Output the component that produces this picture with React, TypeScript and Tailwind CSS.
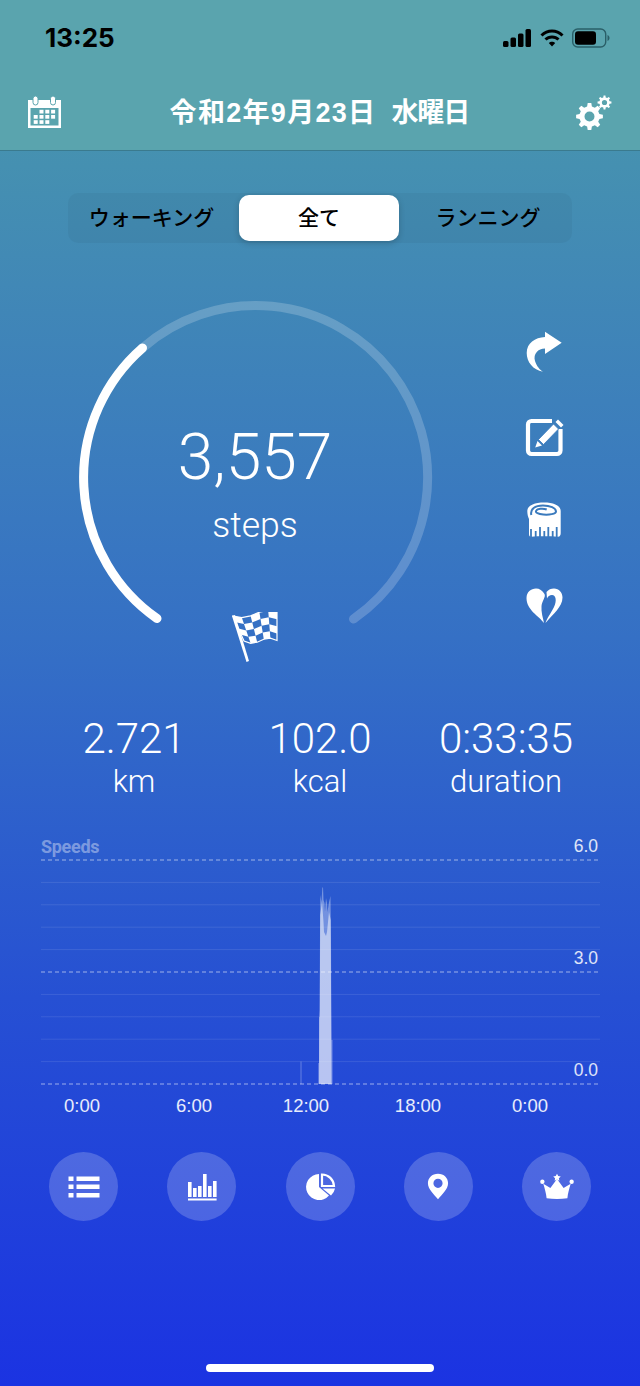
import React from 'react';

const toolBg = '#3a7abd';

function gearPath(cx: number, cy: number, outer: number, inner: number, hole: number, teeth: number) {
  const step = (Math.PI * 2) / teeth;
  let d = '';
  for (let i = 0; i < teeth; i++) {
    const a = i * step;
    const pts: [number, number][] = [
      [inner, a - step * 0.3],
      [outer, a - step * 0.17],
      [outer, a + step * 0.17],
      [inner, a + step * 0.3],
    ];
    pts.forEach(([r, t], j) => {
      d += `${i === 0 && j === 0 ? 'M' : 'L'}${(cx + r * Math.cos(t)).toFixed(2)} ${(cy + r * Math.sin(t)).toFixed(2)} `;
    });
  }
  d += `Z M${cx + hole} ${cy} A${hole} ${hole} 0 1 0 ${cx - hole} ${cy} A${hole} ${hole} 0 1 0 ${cx + hole} ${cy} Z`;
  return d;
}

const CalendarIcon = () => (
  <svg width="36" height="36" viewBox="0 0 36 36" fill="white">
    <path fillRule="evenodd" d="M1 5H34V33H1ZM3.500 13V30.500H31.500V13Z" />
    <rect x="6" y="1" width="5" height="9" rx="2.500" stroke="#5aa4ae" strokeWidth="1" />
    <rect x="23.500" y="1" width="5" height="9" rx="2.500" stroke="#5aa4ae" strokeWidth="1" />
    {[
      [12.500, 14.800],
      [18.300, 14.800],
      [24.100, 14.800],
      [6.700, 20],
      [12.500, 20],
      [18.300, 20],
      [24.100, 20],
      [6.700, 25.200],
      [12.500, 25.200],
      [18.300, 25.200],
    ].map(([x, y]) => (
      <rect key={`${x}-${y}`} x={x} y={y} width="4" height="3.700" />
    ))}
  </svg>
);

const GearsIcon = () => (
  <svg width="36" height="36" viewBox="0 0 36 36" fill="white">
    <path fillRule="evenodd" d={gearPath(13.5, 21.5, 13.5, 10.2, 5, 8)} />
    <path fillRule="evenodd" d={gearPath(28.5, 7.5, 7, 5.2, 2.6, 8)} />
  </svg>
);

const ShareIcon = () => (
  <svg width="40" height="44" viewBox="0 0 40 44" fill="white">
    <path d="M20 1.700L36.700 12.700L20 24V18.500C13 18.500 8 24 10 31C11.500 36 15 40 18 41.700C8 40 1.700 32 1.700 23C1.700 13 10 7.500 20 7Z" />
  </svg>
);

const EditIcon = () => (
  <svg className="overflow-visible" width="40" height="40" viewBox="0 0 40 40" fill="none">
    <path d="M27 3H6.500A3.500 3.500 0 0 0 3 6.500V32.500A3.500 3.500 0 0 0 6.500 36H32A3.500 3.500 0 0 0 35.500 32.500V11" stroke="white" strokeWidth="4.200" />
    <path d="M12.500 23L17 27.500L10.200 29.500Z" fill="white" />
    <path d="M13.500 21.500L28.500 6L33.500 11L18.500 26.500Z" fill="white" stroke={toolBg} strokeWidth="0.800" />
    <path d="M30.500 4L33 1.500L38.500 7L36 9.500Z" fill="white" />
  </svg>
);

const TapeIcon = () => (
  <svg width="40" height="40" viewBox="0 0 40 40" fill="white">
    <path d="M2.300 11C2.300 5.500 9.500 2.500 19 2.500C28.500 2.500 35.700 5.500 35.700 11V33C35.700 35 35 36.700 33 36.700C24 36.200 14 36.200 6 36.700C4.500 36.700 4 35.500 4 34V19C3 17 2.300 14 2.300 11Z" />
    <path
      d="M6.300 15C5 9 10 5.500 18 5.500C25 5.500 31 8 31 11.500C31 14 24 15 18.300 14.500C13 14 10.500 12.500 11 11C12 8.500 18 8 21.700 9.500"
      fill="none"
      stroke={toolBg}
      strokeWidth="2"
    />
    <path d="M6 37V29M10.700 37V31M15 37V27M19.300 37V31M23.300 37V27M27.700 37V31M31.700 37V27" stroke={toolBg} strokeWidth="1.800" />
  </svg>
);

const HeartIcon = () => (
  <svg width="40" height="40" viewBox="0 0 40 40" fill="white">
    <path d="M19 37C14 30 1.500 24 1.500 12C1.500 6 6 2.500 11 2.500C14.500 2.500 17.500 4.500 19.500 8C21 11 17 15 16.500 20C16 26 18 32 19 37Z" />
    <path d="M21.500 6C23.500 3.500 26 2.500 29 2.500C34 2.500 37.500 6.500 37.500 11.500C37.500 21 28 28 20.500 37C21.500 33 26 27 29 21C32 15 31 9 27 9C24.500 9 23 10.500 22 12.500Z" />
  </svg>
);

// checkered flag, cells follow a waving cloth
const flagPoint = (u: number, v: number): [number, number] => {
  const x = 3 + u * 44 + (1 - u) * v * 11;
  const top = 4 - u * 4 + Math.sin(u * Math.PI * 2) * 2.5;
  const bottom = 29 - u * 0.5 + Math.sin(u * Math.PI * 2) * 2.5;
  return [x, top + (bottom - top) * v];
};

const FlagIcon = () => {
  const cells: React.ReactNode[] = [];
  const cols = 5;
  const rows = 4;
  for (let i = 0; i < cols; i++) {
    for (let j = 0; j < rows; j++) {
      if ((i + j) % 2 !== 0) continue;
      const pts = [
        flagPoint(i / cols, j / rows),
        flagPoint((i + 1) / cols, j / rows),
        flagPoint((i + 1) / cols, (j + 1) / rows),
        flagPoint(i / cols, (j + 1) / rows),
      ];
      cells.push(<polygon key={`${i}-${j}`} points={pts.map((p) => p.join(',')).join(' ')} />);
    }
  }
  return (
    <svg width="50" height="52" viewBox="0 0 50 52" fill="white">
      <path d="M2 4L5 3L19 49L16.500 50Z" />
      {cells}
      <path
        d={`M${[0, 0.2, 0.4, 0.6, 0.8, 1].map((u) => flagPoint(u, 0).join(' ')).join('L')}L${[1, 0.8, 0.6, 0.4, 0.2, 0]
          .map((u) => flagPoint(u, 1).join(' '))
          .join('L')}Z`}
        fill="none"
        stroke="white"
        strokeWidth="1.200"
      />
    </svg>
  );
};

const ListIcon = () => (
  <svg width="32" height="24" viewBox="0 0 32 24" fill="white">
    <rect x="0.500" y="1.500" width="5" height="4.500" />
    <rect x="8.500" y="1.500" width="23" height="4.500" />
    <rect x="0.500" y="9.500" width="5" height="4.500" />
    <rect x="8.500" y="9.500" width="23" height="4.500" />
    <rect x="0.500" y="18" width="5" height="4.500" />
    <rect x="8.500" y="18" width="23" height="4.500" />
  </svg>
);

const BarsIcon = () => (
  <svg width="30" height="28" viewBox="0 0 30 28" fill="white">
    <rect x="1" y="9" width="3.600" height="15" />
    <rect x="6" y="15" width="3.600" height="9" />
    <rect x="11" y="13" width="3.600" height="11" />
    <rect x="16" y="1" width="3.600" height="23" />
    <rect x="21" y="13" width="3.600" height="11" />
    <rect x="26" y="8" width="3.600" height="16" />
    <rect x="1" y="25.500" width="28.600" height="2" />
  </svg>
);

const PieIcon = () => (
  <svg width="36" height="32" viewBox="0 0 36 32" fill="white">
    <path d="M17 3A13 13 0 1 0 27 24.400L17 16Z" />
    <path d="M20 3.500A12 12 0 0 1 32 15H20Z" fill="none" stroke="white" strokeWidth="2.200" />
    <path d="M20.500 17.500H33A13 13 0 0 1 29 24.500Z" />
  </svg>
);

const PinIcon = () => (
  <svg width="22" height="29" viewBox="0 0 24 30" fill="white">
    <path
      fillRule="evenodd"
      d="M12 1C5.500 1 1 5.500 1 11.500C1 18 8 24 12 29C16 24 23 18 23 11.500C23 5.500 18.500 1 12 1ZM12 6.500A5 5 0 1 1 12 16.500A5 5 0 1 1 12 6.500Z"
    />
  </svg>
);

const CrownIcon = () => (
  <svg width="34" height="27" viewBox="0 0 36 28" fill="white">
    <path d="M7 26.500C6.500 21 5 16 3.500 11L11 15.500L18 6L25 15.500L32.500 11C31 16 29.500 21 29 26.500C22 27.500 14 27.500 7 26.500Z" />
    <path d="M18 0.500L19.300 3L22 3.400L20 5.300L20.500 8L18 6.700L15.500 8L16 5.300L14 3.400L16.700 3Z" />
    <circle cx="2.500" cy="9" r="2.300" />
    <circle cx="33.500" cy="9" r="2.300" />
  </svg>
);

const StatusBar = () => (
  <div className="h-[76px] flex items-start justify-between pl-[45px] pr-[30px] pt-[24px]">
    <span className="text-[26px] leading-[28px] font-bold text-black font-['Inter',sans-serif]">13:25</span>
    <div className="flex items-center gap-[8px] pt-[4px]">
      <svg width="29" height="18" viewBox="0 0 29 18" fill="black">
        <rect x="0" y="12" width="5.500" height="6" rx="1.500" />
        <rect x="7.500" y="8.500" width="5.500" height="9.500" rx="1.500" />
        <rect x="15" y="4.500" width="5.500" height="13.500" rx="1.500" />
        <rect x="22.500" y="0" width="5.500" height="18" rx="1.500" />
      </svg>
      <svg width="24" height="18" viewBox="0 0 24 18" fill="none" stroke="black" strokeWidth="3">
        <path d="M1.500 6.500C7.500 0.500 16.500 0.500 22.500 6.500" />
        <path d="M5.500 10.500C9 7 15 7 18.500 10.500" />
        <path d="M12 17.500L8.800 14C10.500 12.300 13.500 12.300 15.200 14Z" fill="black" stroke="none" />
      </svg>
      <svg width="38" height="20" viewBox="0 0 38 20" fill="none">
        <rect x="0.700" y="1" width="33" height="18" rx="5" stroke="#2a5f68" strokeWidth="1.400" />
        <rect x="3" y="3.300" width="21" height="13.400" rx="3" fill="black" />
        <path d="M35.500 7V13C36.800 12.500 37.500 11.300 37.500 10C37.500 8.700 36.800 7.500 35.500 7Z" fill="#2a5f68" />
      </svg>
    </div>
  </div>
);

const ticksLight = [882.4, 904.8, 927.2, 949.6, 994.4, 1016.8, 1039.2, 1061.6];
const ticksDash = [860, 972, 1084];

// speed trace around noon: faint envelope, then the denser body
const traceOuter =
  '318.300,1084 318.300,1063 319,1063 319,1017 319.600,1017 320,930 320.300,895 321.500,902 322.300,888 323,887 323.500,900 324.500,903 325,912 326,898 327,903 327.500,912 329,902 330.500,896 331,940 331.500,1040 332.500,1040 332.500,1084';
const traceInner =
  '319,1084 319.300,1020 319.800,1010 320.200,915 322,902 323.500,922 324,932 326,936 327,932 328,922 329,912 330.700,920 331.500,1084';

const SpeedChart = () => (
  <div className="relative mt-[35px] h-[272px]">
    <svg className="absolute left-0 top-0" width="640" height="272" viewBox="0 836 640 272">
      {ticksLight.map((y) => (
        <line key={y} x1="41" x2="600" y1={y} y2={y} stroke="white" strokeOpacity="0.1" strokeWidth="1" />
      ))}
      <rect x="300.500" y="1061.500" width="1" height="22.500" fill="white" fillOpacity="0.3" />
      <polygon points={traceOuter} fill="white" fillOpacity="0.35" />
      <polygon points={traceInner} fill="white" fillOpacity="0.5" />
      {ticksDash.map((y) => (
        <line
          key={y}
          x1="41"
          x2="598"
          y1={y}
          y2={y}
          stroke="white"
          strokeOpacity="0.55"
          strokeWidth="1"
          strokeDasharray="4 3"
        />
      ))}
    </svg>
    <span className="absolute left-[41px] top-[0px] text-[18px] leading-[21px] font-bold text-white/40 font-['Roboto',sans-serif] tracking-[-0.3px]">
      Speeds
    </span>
    <span className="absolute right-[42px] top-[0px] text-[17.5px] leading-[20px] text-white/85">6.0</span>
    <span className="absolute right-[42px] top-[112px] text-[17.5px] leading-[20px] text-white/85">3.0</span>
    <span className="absolute right-[42px] top-[224px] text-[17.5px] leading-[20px] text-white/85">0.0</span>
    <div className="absolute left-[26px] top-[260px] w-[560px] grid grid-cols-5 text-center text-[18.5px] leading-[20px] text-white/90">
      <span>0:00</span>
      <span>6:00</span>
      <span>12:00</span>
      <span>18:00</span>
      <span>0:00</span>
    </div>
  </div>
);

const NavButton = ({ children }: { children: React.ReactNode }) => (
  <button className="w-[69px] h-[69px] rounded-full bg-white/20 flex items-center justify-center">{children}</button>
);

const Stat = ({ value, label }: { value: string; label: string }) => (
  <div className="flex flex-col items-center text-white font-['Roboto',sans-serif] font-light">
    <span className="text-[42px] leading-[48px]">{value}</span>
    <span className="text-[31px] leading-[38px]">{label}</span>
  </div>
);

export default function App() {
  return (
    <div className="relative w-[640px] h-[1386px] flex flex-col overflow-hidden font-['Liberation_Sans','Noto_Sans_CJK_JP',sans-serif] bg-[linear-gradient(180deg,#4a98ae_0%,#4590b1_12%,#3570c5_46%,#2650d3_72%,#1b33e2_100%)]">
      {/* header */}
      <div className="h-[151px] shrink-0 bg-[#5aa4ae] border-b border-[#3a7a8e]">
        <StatusBar />
        <div className="flex items-center justify-between pl-[27px] pr-[28px] h-[74px]">
          <CalendarIcon />
          <h1 className="flex gap-[15px] text-[27px] leading-[32px] font-bold text-white">
            <span className="tracking-[1.3px]">令和2年9月23日</span>
            <span className="tracking-[-1px]">水曜日</span>
          </h1>
          <GearsIcon />
        </div>
      </div>

      {/* segment */}
      <div className="mt-[42px] ml-[68px] w-[504px] h-[50px] rounded-[10px] bg-black/[0.04] flex items-center text-[21px] font-medium text-black">
        <span className="w-[171px] pr-[4px] text-center">ウォーキング</span>
        <span className="w-[160px] h-[46px] rounded-[10px] bg-white flex items-center justify-center shadow-[0_2px_6px_rgba(0,0,0,0.2)]">
          全て
        </span>
        <span className="flex-1 pl-[5px] text-center">ランニング</span>
      </div>

      {/* gauge and side tools */}
      <div className="mt-[50px] h-[378px] flex">
        <div className="relative w-[525px] h-full">
          <svg className="absolute left-0 top-0" width="525" height="378" viewBox="0 293 525 378" fill="none">
            <path d="M142.500 348A172 172 0 1 1 353.500 619" stroke="white" strokeOpacity="0.2" strokeWidth="9" strokeLinecap="round" />
            <path d="M157 618.500A172 172 0 0 1 142.500 348" stroke="white" strokeWidth="9" strokeLinecap="round" />
          </svg>
          <div className="absolute left-[79px] top-[129px] w-[352px] flex flex-col items-center text-white font-['Roboto',sans-serif] font-light">
            <span className="text-[64px] leading-[72px]">3,557</span>
            <span className="text-[35.5px] leading-[42px] mt-[10px]">steps</span>
          </div>
          <div className="absolute left-[230px] top-[319px]">
            <FlagIcon />
          </div>
        </div>
        <div className="w-[40px] flex flex-col pt-[37px]">
          <ShareIcon />
          <div className="h-[40px] mt-[44px]">
            <EditIcon />
          </div>
          <div className="h-[40px] mt-[42px]">
            <TapeIcon />
          </div>
          <div className="h-[40px] mt-[46px]">
            <HeartIcon />
          </div>
        </div>
      </div>

      {/* totals */}
      <div className="mt-[44px] ml-[41px] w-[558px] grid grid-cols-3">
        <Stat value="2.721" label="km" />
        <Stat value="102.0" label="kcal" />
        <Stat value="0:33:35" label="duration" />
      </div>

      <SpeedChart />

      {/* bottom nav */}
      <div className="mt-[44px] pl-[49px] pr-[49px] flex justify-between">
        <NavButton>
          <ListIcon />
        </NavButton>
        <NavButton>
          <BarsIcon />
        </NavButton>
        <NavButton>
          <PieIcon />
        </NavButton>
        <NavButton>
          <PinIcon />
        </NavButton>
        <NavButton>
          <CrownIcon />
        </NavButton>
      </div>

      <div className="mt-auto mb-[14px] mx-auto w-[228px] h-[8px] rounded-full bg-white" />
    </div>
  );
}
